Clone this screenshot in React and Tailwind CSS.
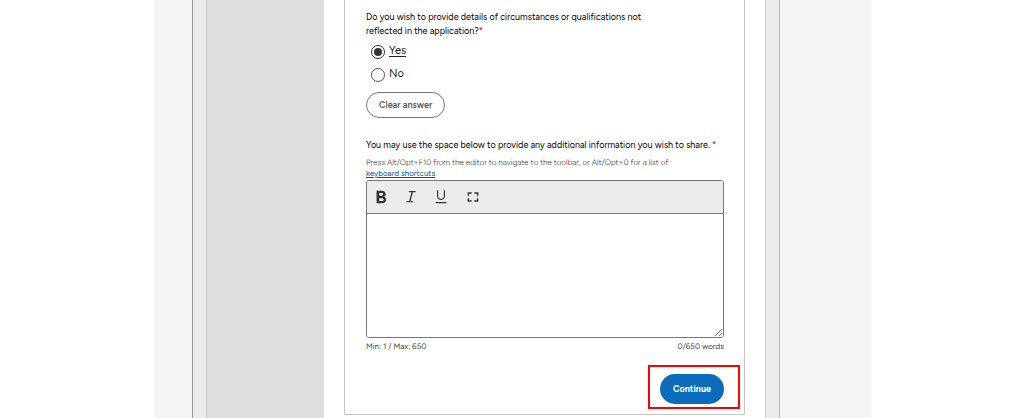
import { useState } from 'react';

const toolbarIcons = [
  {
    name: 'Bold',
    path: 'M15.6 10.79c.97-.67 1.65-1.77 1.65-2.79 0-2.26-1.75-4-4-4H7v14h7.04c2.09 0 3.71-1.7 3.71-3.79 0-1.52-.86-2.82-2.15-3.42zM10 6.5h3c.83 0 1.5.67 1.5 1.5s-.67 1.5-1.5 1.5h-3v-3zm3.5 9H10v-3h3.5c.83 0 1.5.67 1.5 1.5s-.67 1.5-1.5 1.5z',
    viewBox: '3 2 18 18',
  },
  {
    name: 'Italic',
    path: 'M9 3h10v1.7h-4.1l-3.6 13.6H15V20H5v-1.7h4.2l3.6-13.6H9z',
    viewBox: '0 0 24 24',
  },
  {
    name: 'Underline',
    path: 'M12 16.5c3.31 0 6-2.69 6-6V2h-1.8v8.5c0 2.6-1.7 4.3-4.2 4.3S7.8 13.1 7.8 10.5V2H6v8.5c0 3.31 2.69 6 6 6zM4 19.5v1.7h16v-1.7H4z',
    viewBox: '0 0 24 24',
  },
  {
    name: 'Fullscreen',
    path: 'M4 5h6v2.2H6.2V10H4zM14 5h6v5h-2.2V7.2H14zM4 14h2.2v2.8H10V19H4zM17.8 14H20v5h-6v-2.2h3.8z',
    viewBox: '0 0 24 24',
  },
];

const RadioOption = ({ value, selected, onChange }) => (
  <label className="flex h-[23px] items-center gap-1 pl-[5px] text-[11px] text-[#222]">
    <input
      type="radio"
      name="circumstances"
      value={value}
      checked={selected}
      onChange={() => onChange(value)}
      className="h-[14px] w-[14px] appearance-none rounded-full border border-[#555] bg-white bg-clip-content p-[2px] checked:border-[#333] checked:bg-[#333]"
    />
    <span className={selected ? 'underline underline-offset-2' : ''}>{value}</span>
  </label>
);

const Editor = () => {
  const [text, setText] = useState('');
  const words = text.trim() ? text.trim().split(/\s+/).length : 0;

  return (
    <div>
      <div className="overflow-hidden rounded-[3px] border border-[#777]">
        <div className="flex h-[33px] items-center gap-[14px] border-b border-[#777] bg-[#ebebeb] pl-[6px] text-[#333]">
          {toolbarIcons.map((icon) => (
            <button key={icon.name} type="button" aria-label={icon.name} className="w-4 last:ml-[2px]">
              <svg viewBox={icon.viewBox} className="h-4 w-4" fill="currentColor">
                <path d={icon.path} />
              </svg>
            </button>
          ))}
        </div>
        <textarea
          id="additional-info"
          value={text}
          onChange={(e) => setText(e.target.value)}
          className="block h-[123px] w-full resize-y bg-white p-2 text-[9px] outline-none"
        />
      </div>
      <div className="flex justify-between pt-[2px] text-[8px] leading-[13px] text-[#444] [text-rendering:geometricPrecision]">
        <span>Min: 1 / Max: 650</span>
        <span>{words}/650 words</span>
      </div>
    </div>
  );
};

export default function App() {
  const [answer, setAnswer] = useState('Yes');

  return (
    <div className="min-h-screen bg-white font-['Figtree','Inter',sans-serif]">
      <div className="mx-auto flex min-h-screen w-full max-w-[717px] bg-[#f4f4f4] pr-[91px] pl-[38px]">
        <div className="flex flex-1 border-r border-l border-r-[#b5b5b5] border-l-[#999] bg-[#ebebeb] px-[13px]">
          <aside className="w-[118px] shrink-0 border-l border-[#c8c8c8] bg-[#dedede]" />
          <main className="flex-1 border-r border-[#d5d5d5] bg-white pr-5 pb-1 pl-5">
            <form
              className="border-r border-b border-l border-[#c4c4c4] pt-[10px] pr-5 pb-[5px] pl-[21px]"
              onSubmit={(e) => e.preventDefault()}
            >
              <fieldset>
                <legend className="max-w-[300px] text-[9px] leading-[14px] text-black">
                  Do you wish to provide details of circumstances or qualifications not reflected in the
                  application?<span className="text-[#e00]">*</span>
                </legend>
                <div className="pt-[2px]">
                  <RadioOption value="Yes" selected={answer === 'Yes'} onChange={setAnswer} />
                  <RadioOption value="No" selected={answer === 'No'} onChange={setAnswer} />
                </div>
                <button
                  type="button"
                  onClick={() => setAnswer('')}
                  className="mt-[6px] block h-[26px] rounded-full border border-[#777] px-3 text-[9px] font-semibold text-[#555]"
                >
                  Clear answer
                </button>
              </fieldset>

              <label htmlFor="additional-info" className="mt-5 block text-[9px] leading-[14px] text-black">
                You may use the space below to provide any additional information you wish to share.{' '}
                <span className="text-[#e00]">*</span>
              </label>
              <p className="mt-[5px] mb-[1px] max-w-[310px] text-[8px] leading-[11px] font-light text-[#333] [text-rendering:geometricPrecision]">
                Press Alt/Opt+F10 from the editor to navigate to the toolbar, or Alt/Opt+0 for a list of{' '}
                <a href="#shortcuts" className="font-normal text-[#005587] underline">
                  keyboard shortcuts
                </a>
                .
              </p>
              <Editor />

              <div className="-mr-4 mt-3 flex justify-end">
                <div className="border-2 border-[#f00] pt-[7px] pr-[14px] pb-[3px] pl-[10px]">
                  <button
                    type="submit"
                    className="block h-[30px] w-16 rounded-full bg-[#0b6cbd] text-[9px] font-bold text-white"
                  >
                    Continue
                  </button>
                </div>
              </div>
            </form>
          </main>
        </div>
      </div>
    </div>
  );
}
